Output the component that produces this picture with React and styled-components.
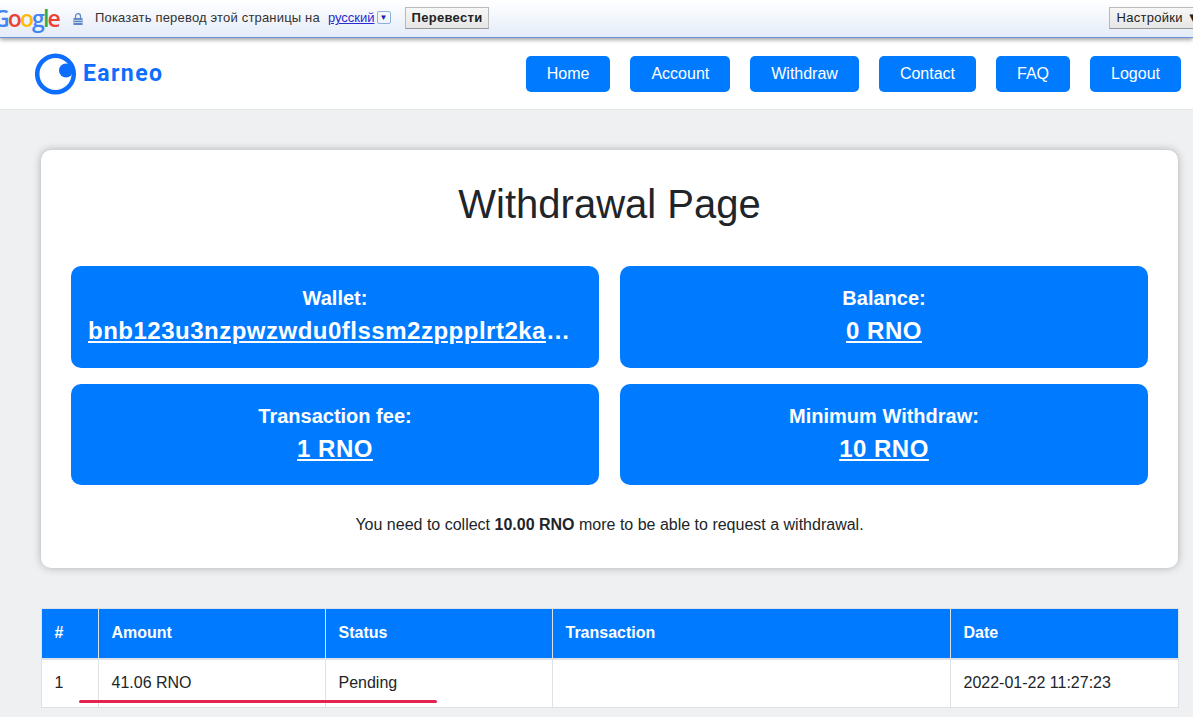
import React from 'react'
import styled, { createGlobalStyle } from 'styled-components'

const blue = '#007bff'

const GlobalStyle = createGlobalStyle`
  html, body {
    margin: 0;
    height: 717px;
    overflow: hidden;
    background: #eff0f2;
    font-family: "Liberation Sans", Arial, sans-serif;
    color: #212529;
  }
  * { box-sizing: border-box; }
`

const Page = styled.div`
  position: relative;
  width: 1193px;
  height: 717px;
  overflow: hidden;
`

const TranslateBar = styled.div`
  position: relative;
  z-index: 2;
  display: flex;
  align-items: center;
  height: 38px;
  padding-bottom: 2px;
  background: linear-gradient(#ffffff, #e4ecf8);
  border-bottom: 1px solid #6b90da;
  box-shadow: 0 2px 4px rgba(0, 0, 0, 0.35);
  font-size: 13px;
  white-space: nowrap;
`

const GoogleLogo = styled.div`
  flex-shrink: 0;
  margin-left: -7px;
  width: 80px;
  font-family: "Open Sans", "Liberation Sans", sans-serif;
  font-size: 23px;
  font-weight: 600;
  letter-spacing: -1.9px;
  line-height: 30px;
`

const Letter = styled.span`
  color: ${({ color }) => color};
`

const LockIcon = styled.svg`
  flex-shrink: 0;
  width: 10px;
  height: 12px;
  margin-right: 12px;
  margin-top: 2px;
`

const BarText = styled.span`
  color: #333;
  letter-spacing: 0.18px;
`

const LangLink = styled.a`
  margin-left: 8px;
  color: #2a2ad0;
  text-decoration: underline;
`

const LangArrow = styled.span`
  display: inline-flex;
  flex-shrink: 0;
  align-items: center;
  justify-content: center;
  width: 14px;
  height: 13px;
  margin-left: 2px;
  border: 1px solid #8fb0dc;
  border-radius: 2px;
  color: #1a1ab0;
  font-size: 8px;
`

const BarButton = styled.button`
  flex-shrink: 0;
  height: 22px;
  margin-left: ${({ $left }) => $left}px;
  padding: 0 ${({ $pad }) => $pad}px;
  border: 1px solid #b9b9b9;
  border-bottom-color: #999;
  background: linear-gradient(#f7f7f7, #e6e6e6);
  color: #222;
  font-family: "Liberation Sans", Arial, sans-serif;
  font-size: 13px;
  font-weight: ${({ $bold }) => ($bold ? 700 : 400)};
  letter-spacing: 0.3px;
  white-space: nowrap;
`

const Nav = styled.nav`
  display: flex;
  align-items: center;
  justify-content: space-between;
  height: 72px;
  padding: 0 12px 0 35px;
  background: #fff;
  border-bottom: 1px solid #e4e8e8;
`

const Brand = styled.div`
  display: flex;
  align-items: center;
  gap: 6px;
  color: #0d6efd;
  font-family: Roboto, "Liberation Sans", sans-serif;
  font-size: 23px;
  font-weight: 700;
  letter-spacing: 1.4px;
`

const BrandMark = styled.svg`
  width: 42px;
  height: 42px;
`

const NavLinks = styled.div`
  display: flex;
  gap: 20px;
`

const NavButton = styled.a`
  display: flex;
  align-items: center;
  height: 36px;
  padding: 0 21px;
  background: ${blue};
  border-radius: 5px;
  color: #fff;
  font-size: 16px;
`

const Main = styled.main`
  padding: 40px 15px 0 41px;
`

const Card = styled.section`
  height: 418px;
  padding: 28px 30px 0;
  background: #fff;
  border-radius: 10px;
  box-shadow: 0 0 8px rgba(0, 0, 0, 0.28);
  text-align: center;
`

const Title = styled.h1`
  margin: 0 0 35px;
  height: 53px;
  font-size: 40px;
  font-weight: 400;
  line-height: 53px;
`

const StatGrid = styled.div`
  display: grid;
  grid-template-columns: 528px 528px;
  grid-auto-rows: 101.5px;
  column-gap: 21px;
  row-gap: 16px;
`

const StatBox = styled.div`
  display: flex;
  flex-direction: column;
  align-items: center;
  justify-content: center;
  min-width: 0;
  padding: 0 17px 1px;
  background: ${blue};
  border-radius: 10px;
  color: #fff;
`

const StatLabel = styled.div`
  font-size: 20px;
  font-weight: 700;
  line-height: 30px;
`

const StatValue = styled.a`
  display: block;
  max-width: 100%;
  overflow: hidden;
  color: #fff;
  font-size: 24px;
  font-weight: 700;
  letter-spacing: 0.5px;
  line-height: 36px;
  text-decoration: underline;
  text-overflow: ellipsis;
  white-space: nowrap;
`

const Notice = styled.p`
  margin: 28px 0 0;
  font-size: 16px;
  line-height: 24px;
`

const DataTable = styled.table`
  width: 1137px;
  margin-top: 40px;
  border-collapse: collapse;
  table-layout: fixed;
  background: #fff;
  font-size: 16px;
`

const HeadCell = styled.th`
  width: ${({ $w }) => $w}px;
  height: 50px;
  padding: 0 12.5px;
  background: ${blue};
  border: 1px solid #dee2e6;
  border-bottom-width: 2px;
  color: #fff;
  font-weight: 700;
  text-align: left;
`

const Cell = styled.td`
  height: 49px;
  padding: 0 12.5px;
  border: 1px solid #dee2e6;
`

const RedMark = styled.div`
  position: absolute;
  left: 79px;
  top: 700px;
  width: 358px;
  height: 3px;
  background: #e5234f;
  border-radius: 2px;
`

const navItems = ['Home', 'Account', 'Withdraw', 'Contact', 'FAQ', 'Logout']

const stats = [
  { label: 'Wallet:', value: 'bnb123u3nzpwzwdu0flssm2zppplrt2kaxkaxkaxkaxkax' },
  { label: 'Balance:', value: '0 RNO' },
  { label: 'Transaction fee:', value: '1 RNO' },
  { label: 'Minimum Withdraw:', value: '10 RNO' },
]

const columns = [
  { name: '#', width: 57 },
  { name: 'Amount', width: 227 },
  { name: 'Status', width: 227 },
  { name: 'Transaction', width: 398 },
  { name: 'Date', width: 228 },
]

const googleLetters = [
  ['G', '#4285f4'],
  ['o', '#ea4335'],
  ['o', '#fbbc05'],
  ['g', '#4285f4'],
  ['l', '#34a853'],
  ['e', '#ea4335'],
]

export default function App() {
  return (
    <Page>
      <GlobalStyle />
      <TranslateBar>
        <GoogleLogo>
          {googleLetters.map(([ch, color], i) => (
            <Letter key={i} color={color}>{ch}</Letter>
          ))}
        </GoogleLogo>
        <LockIcon viewBox="0 0 10 12">
          <path d="M2.5 5V3.2a2.5 2.5 0 0 1 5 0V5" fill="none" stroke="#5b86c4" strokeWidth="1.2" />
          <rect x="0.5" y="5" width="9" height="7" fill="#5b86c4" />
          <path d="M1 7.3h8M1 9.5h8" stroke="#dfe8f5" strokeWidth="0.8" />
        </LockIcon>
        <BarText>Показать перевод этой страницы на</BarText>
        <LangLink>русский</LangLink>
        <LangArrow>▼</LangArrow>
        <BarButton $left={14} $pad={6} $bold>Перевести</BarButton>
        <BarButton $left={620} $pad={6}>Настройки ▼</BarButton>
      </TranslateBar>

      <Nav>
        <Brand>
          <BrandMark viewBox="0 0 42 42">
            <circle cx="20.5" cy="21" r="18.3" fill="none" stroke="#0d6efd" strokeWidth="4.5" />
            <circle cx="31" cy="17.5" r="7" fill="#0d6efd" />
          </BrandMark>
          Earneo
        </Brand>
        <NavLinks>
          {navItems.map(item => (
            <NavButton key={item}>{item}</NavButton>
          ))}
        </NavLinks>
      </Nav>

      <Main>
        <Card>
          <Title>Withdrawal Page</Title>
          <StatGrid>
            {stats.map(stat => (
              <StatBox key={stat.label}>
                <StatLabel>{stat.label}</StatLabel>
                <StatValue>{stat.value}</StatValue>
              </StatBox>
            ))}
          </StatGrid>
          <Notice>
            You need to collect <b>10.00 RNO</b> more to be able to request a withdrawal.
          </Notice>
        </Card>

        <DataTable>
          <thead>
            <tr>
              {columns.map(col => (
                <HeadCell key={col.name} $w={col.width}>{col.name}</HeadCell>
              ))}
            </tr>
          </thead>
          <tbody>
            <tr>
              <Cell>1</Cell>
              <Cell>41.06 RNO</Cell>
              <Cell>Pending</Cell>
              <Cell />
              <Cell>2022-01-22 11:27:23</Cell>
            </tr>
          </tbody>
        </DataTable>
      </Main>
      <RedMark />
    </Page>
  )
}
